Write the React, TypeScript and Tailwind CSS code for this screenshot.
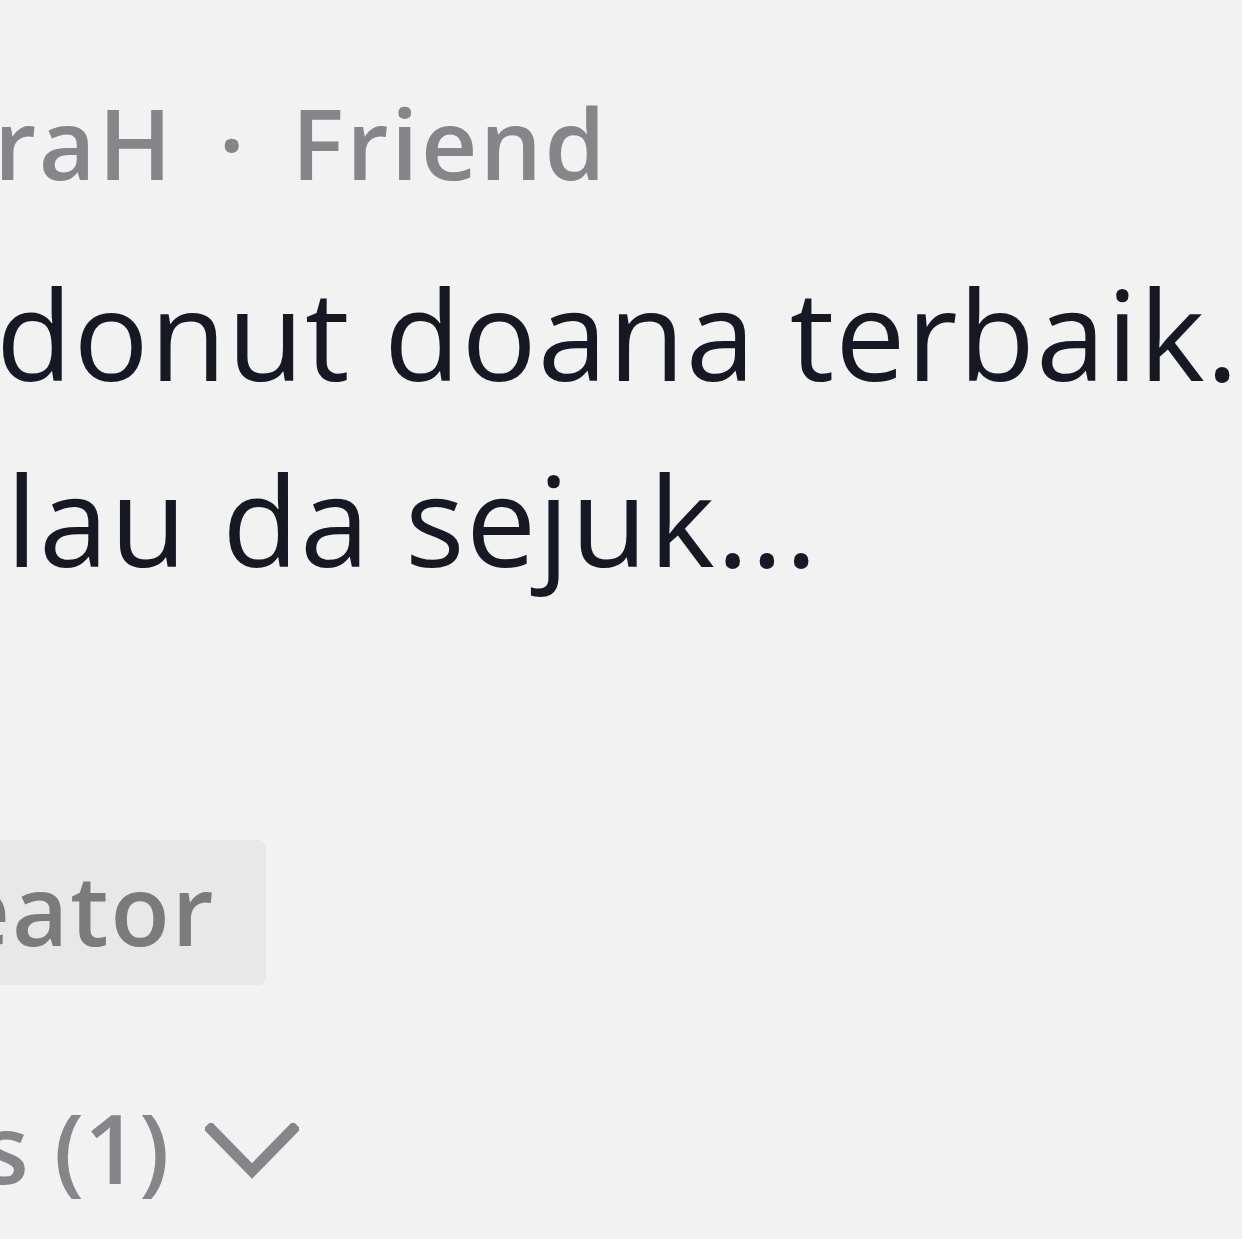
export default function App() {
  const font = { fontFamily: '"Open Sans", Lato, sans-serif' };
  return (
    <div className="w-[1242px] h-[1239px] overflow-hidden bg-[#f2f2f3] relative" style={font}>
      <div className="flex flex-col">
        <div className="mt-[82px] ml-[-6px] h-[120px] leading-[120px] text-[98px] font-semibold tracking-[2.5px] text-[#86868a] whitespace-nowrap">
          raH <span className="mx-[16px]">·</span> Friend
        </div>
        <div className="mt-[38px] ml-[-4px] text-[125px] leading-[186px] tracking-[1px] text-[#161823] whitespace-nowrap">
          <div>donut doana terbaik.</div>
          <div className="ml-[10px] tracking-[1.5px]">lau da sejuk...</div>
        </div>
        <div className="mt-[228px] ml-[-160px] self-start h-[145px] flex items-center pl-[20px] pr-[50px] pb-[10px] bg-[#e8e8e9] text-[97px] font-semibold tracking-[2px] text-[#7b7b7e] leading-[120px] rounded-[8px]">
          creator
        </div>
        <div className="mt-[102px] ml-[-18px] flex items-center gap-[36px] h-[120px] text-[96px] leading-[120px] font-semibold text-[#86868a] whitespace-nowrap">
          <span>s (1)</span>
          <svg width="94" height="58" viewBox="0 0 94 58" className="mt-[10px]">
            <polyline points="6,6 47,48 88,6" fill="none" stroke="#86868a" strokeWidth="11" strokeLinecap="square" strokeLinejoin="miter" />
          </svg>
        </div>
      </div>
    </div>
  );
}
